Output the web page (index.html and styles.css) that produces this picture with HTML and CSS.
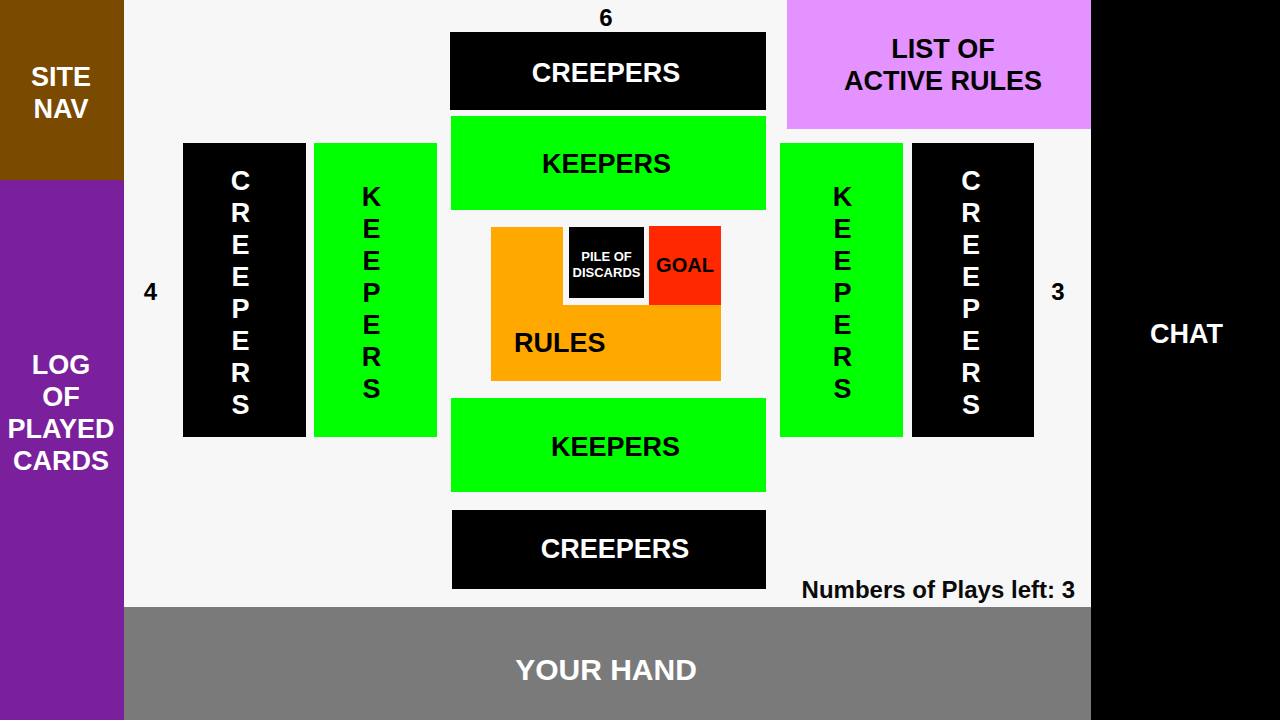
FILE: index.html
```html
<!DOCTYPE html>
<html lang="en">
<head>
<meta charset="utf-8">
<meta name="viewport" content="width=device-width, initial-scale=1">
<title>Game table</title>
<link rel="stylesheet" href="styles.css">
</head>
<body>
<div class="layout">
  <div class="sidebar">
    <nav class="site-nav">SITE<br>NAV</nav>
    <section class="log">LOG<br>OF<br>PLAYED<br>CARDS</section>
  </div>

  <main class="table">
    <div class="board">
      <section class="side side-left">
        <div class="seat seat-left">
          <span class="count">4</span>
          <div class="zone creepers">C<br>R<br>E<br>E<br>P<br>E<br>R<br>S</div>
          <div class="zone keepers">K<br>E<br>E<br>P<br>E<br>R<br>S</div>
        </div>
      </section>

      <section class="middle">
        <span class="count">6</span>
        <div class="zone creepers opponent">CREEPERS</div>
        <div class="zone keepers opponent">KEEPERS</div>
        <div class="center">
          <div class="rules-corner"></div>
          <div class="discards">PILE OF<br>DISCARDS</div>
          <div class="goal">GOAL</div>
          <div class="rules">RULES</div>
        </div>
        <div class="zone keepers own">KEEPERS</div>
        <div class="zone creepers own">CREEPERS</div>
      </section>

      <section class="side side-right">
        <div class="active-rules">LIST OF<br>ACTIVE RULES</div>
        <div class="seat seat-right">
          <div class="zone keepers">K<br>E<br>E<br>P<br>E<br>R<br>S</div>
          <div class="zone creepers">C<br>R<br>E<br>E<br>P<br>E<br>R<br>S</div>
          <span class="count">3</span>
        </div>
        <p class="plays">Numbers of Plays left: 3</p>
      </section>
    </div>
    <section class="hand">YOUR HAND</section>
  </main>

  <aside class="chat">CHAT</aside>
</div>
</body>
</html>
```

FILE: styles.css
```css
* {
  box-sizing: border-box;
}

body {
  margin: 0;
  background: #f7f7f7;
  color: #000;
  font: bold 27px/32px "Liberation Sans", Helvetica, Arial, sans-serif;
  text-align: center;
}

.layout {
  display: grid;
  grid-template-columns: 124fr 967fr 189fr;
  min-height: 100vh;
}

.sidebar,
.table,
.middle,
.side {
  display: flex;
  flex-direction: column;
}

.site-nav,
.log,
.zone,
.discards,
.goal,
.active-rules,
.hand,
.chat {
  display: flex;
  align-items: center;
  justify-content: center;
}

/* Left column */

.site-nav {
  padding: 61px 2px 55px 0;
  background: #7a4a00;
  color: #fff;
}

.log {
  flex: 1;
  padding: 0 2px 74px 0;
  background: #7a209d;
  color: #fff;
}

/* Board */

.board {
  flex: 1;
  display: grid;
  grid-template-columns: 326fr 316fr 325fr;
}

.count {
  font-size: 24px;
}

.creepers {
  background: #000;
  color: #fff;
}

.keepers {
  background: #00ff00;
}

.side-left {
  padding-top: 143px;
}

.seat {
  display: grid;
  align-items: center;
}

.seat-left {
  grid-template-columns: 51fr 123fr 123fr;
  column-gap: 8px;
  padding-right: 13px;
}

.seat-right {
  grid-template-columns: 123fr 122fr 48fr;
  column-gap: 9px;
  margin-top: 14px;
  padding-left: 14px;
}

.seat .zone {
  align-self: stretch;
  padding: 22px 0 16px;
}

.seat-left .zone {
  padding-right: 8px;
}

.seat-right .keepers {
  padding-left: 2px;
}

.seat-right .creepers {
  padding-right: 4px;
}

.seat .count {
  padding-top: 4px;
}

.seat-left .count {
  padding-left: 2px;
}

.seat-right .count {
  padding-right: 18px;
}

.middle .opponent {
  padding: 25px 4px 21px 0;
}

.middle .keepers {
  margin: 6px 0 0 1px;
  padding-block: 32px 30px;
}

.middle .own {
  padding-left: 14px;
}

.middle .keepers.own {
  margin-top: 17px;
  padding-block: 33px 29px;
}

.middle .creepers.own {
  margin: 18px 0 0 2px;
  padding: 23px 0 24px 12px;
}

.middle > .count {
  padding: 4px 4px 0 0;
  line-height: 28px;
}

/* Shared cards in the centre */

.center {
  display: grid;
  grid-template-columns: 72fr 86fr 72fr;
  margin: 16px 45px 0 41px;
}

.rules-corner {
  margin-top: 1px;
  background: #ffa900;
}

.discards {
  margin: 1px 5px 7px 6px;
  padding-top: 5px;
  background: #000;
  color: #fff;
  font-size: 13px;
  line-height: 16px;
}

.goal {
  padding: 23px 0 24px;
  background: #ff2800;
  font-size: 20px;
}

.rules {
  grid-column: 1 / -1;
  padding: 22px 23px;
  background: #ffa900;
  text-align: left;
}

/* Right side of the board */

.active-rules {
  margin-left: 21px;
  padding: 33px 0 32px 8px;
  background: #e392ff;
}

.plays {
  margin: auto 16px 0 0;
  padding-bottom: 1px;
  color: #0a0a0a;
  font-size: 24px;
  text-align: right;
  white-space: nowrap;
}

.hand {
  padding: 47px 3px 34px 0;
  background: #7a7a7a;
  color: #fff;
  font-size: 30px;
}

.chat {
  padding: 0 0 52px 2px;
  background: #000;
  color: #fff;
}
```
